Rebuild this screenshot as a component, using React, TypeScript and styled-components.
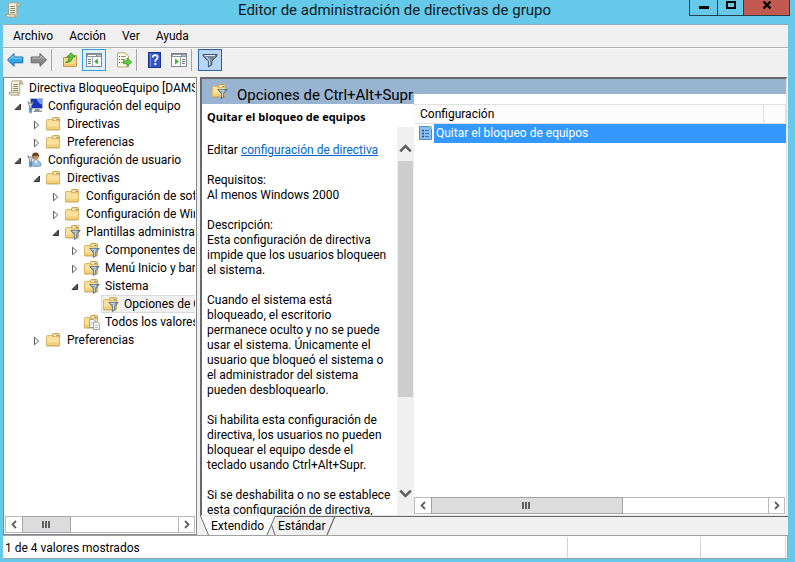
import React from "react";
import styled, { createGlobalStyle, css } from "styled-components";

const GlobalStyle = createGlobalStyle`
  * { box-sizing: border-box; }
  body { margin: 0; }
  body, button, table { font-family: Roboto, "Open Sans", sans-serif; font-size: 12px; line-height: 15px; color: #000; }
  button { border: 0; padding: 0; background: none; }
  svg { display: block; flex: none; }
`;

const Frame = styled.div`
  display: flex;
  flex-direction: column;
  height: 100vh;
  padding: 0 7px 3px 3px;
  background: #66c9ea;
  overflow: hidden;
`;

const TitleBar = styled.header`
  display: grid;
  grid-template-columns: 104px 1fr 108px;
  flex: none;
  height: 24px;
  margin-right: -2px;
`;
const TitleIcon = styled.div`
  padding: 2px;
`;
const Title = styled.h1`
  margin: 0;
  font-size: 15px;
  line-height: 20px;
  font-weight: 400;
  text-align: center;
  white-space: nowrap;
  color: #0b1c24;
`;
const WindowButtons = styled.div`
  display: flex;
  justify-content: flex-end;
  height: 16px;
`;
const WindowButton = styled.button<{ $kind?: "middle" | "close" }>`
  display: flex;
  justify-content: center;
  width: ${(p) => (p.$kind === "close" ? 47 : p.$kind === "middle" ? 27 : 29)}px;
  border: 1px solid #23404b;
  border-top: 0;
  margin-left: -1px;
  background: ${(p) => (p.$kind === "close" ? "#c35a50" : "transparent")};
`;

const Client = styled.main`
  display: flex;
  flex-direction: column;
  flex: 1;
  min-height: 0;
  background: #f0f0f0;
  border-top: 1px solid #8fa9b5;
`;
const MenuBar = styled.nav`
  display: flex;
  gap: 16px;
  flex: none;
  height: 23px;
  padding: 0 10px;
  border-bottom: 1px solid #b0b0b0;
`;
const MenuItem = styled.button`
  height: 22px;
`;
const ToolBar = styled.div`
  display: flex;
  flex: none;
  height: 29px;
  border-top: 1px solid #fafafa;
`;
const Tool = styled.button<{ $state?: "hot" | "checked" }>`
  display: flex;
  align-items: center;
  justify-content: center;
  width: 24px;
  height: 22px;
  ${(p) => p.$state === "hot" && css`background: #e0f0fb; border: 1px solid #2f9fdf;`}
  ${(p) => p.$state === "checked" && css`background: #b9d5f6; border: 1px solid #2b619c;`}
`;
const ToolSeparator = styled.div`
  width: 1px;
  height: 22px;
  margin-right: 6px;
  background: #a5a5a5;
`;
const ToolGap = styled.div`
  width: 6px;
`;

const Panes = styled.div`
  display: grid;
  grid-template-columns: 194px minmax(0, 1fr);
  gap: 3px;
  flex: 1;
  min-height: 0;
`;
const TreePane = styled.section`
  display: flex;
  flex-direction: column;
  min-height: 0;
  background: #fff;
  border: 1px solid #828790;
`;
const Tree = styled.ul`
  flex: 1;
  min-height: 0;
  margin: 0;
  padding: 1px 1px 0 0;
  list-style: none;
  overflow: hidden;
`;
const TreeRow = styled.li<{ $level: number }>`
  display: flex;
  height: 18px;
  padding-left: ${(p) => (p.$level === 0 ? 2 : 6 + 19 * (p.$level - 1))}px;
`;
const Expander = styled.button`
  display: flex;
  align-items: center;
  justify-content: center;
  flex: none;
  width: 15px;
  height: 18px;
  padding-top: 2px;
`;
const TreeLabel = styled.button<{ $selected?: boolean }>`
  display: flex;
  align-items: center;
  gap: 5px;
  flex: 1;
  min-width: 0;
  padding-left: 1px;
  border: 1px solid ${(p) => (p.$selected ? "#dadada" : "transparent")};
  border-right: 0;
  background: ${(p) => (p.$selected ? "#f0f0f0" : "transparent")};
  white-space: nowrap;
  overflow: hidden;
`;

const HScroll = styled.div<{ $flush?: boolean }>`
  display: flex;
  flex: none;
  height: 17px;
  margin: 1px 1px 1px ${(p) => (p.$flush ? 0 : 1)}px;
  border: 1px solid #bababa;
  background: #fff;
`;
const HScrollButton = styled.button<{ $end?: boolean }>`
  display: flex;
  align-items: center;
  justify-content: center;
  width: 16px;
  margin-left: ${(p) => (p.$end ? "auto" : 0)};
  border-left: ${(p) => (p.$end ? "1px solid #bababa" : 0)};
`;
const HThumb = styled.div<{ $share: number }>`
  display: flex;
  align-items: center;
  justify-content: center;
  flex: 0 0 ${(p) => p.$share}%;
  margin: -1px 0;
  border: 1px solid #a3a3a3;
  background: #dcdcdc;
`;

const RightSide = styled.div`
  display: flex;
  flex-direction: column;
  min-height: 0;
`;
const ResultPane = styled.section`
  display: grid;
  grid-template-columns: 212px minmax(0, 1fr);
  flex: 1;
  min-height: 0;
  margin-right: 1px;
  border-top: 2px solid #696969;
  border-left: 2px solid #696969;
  border-right: 1px solid #e3e3e3;
  border-bottom: 1px solid #e3e3e3;
  background: #fff;
`;
const Detail = styled.div`
  display: flex;
  flex-direction: column;
  min-height: 0;
`;
const Band = styled.div<{ $tall?: boolean }>`
  display: flex;
  gap: 9px;
  position: relative;
  z-index: ${(p) => (p.$tall ? 1 : 0)};
  flex: none;
  height: ${(p) => (p.$tall ? 25 : 15)}px;
  padding: ${(p) => (p.$tall ? "4px 0 0 10px" : 0)};
  background: #99b4d1;
`;
const BandTitle = styled.h2`
  margin: 0;
  font-size: 15px;
  line-height: 24px;
  font-weight: 400;
  white-space: nowrap;
`;
const PolicyName = styled.h3`
  flex: none;
  margin: 0;
  padding: 5px 5px 3px;
  font-family: "Open Sans", sans-serif;
  font-size: 11px;
  line-height: 15px;
  font-weight: 700;
  white-space: nowrap;
`;
const DetailBody = styled.div`
  display: flex;
  flex: 1;
  min-height: 0;
`;
const Description = styled.div`
  flex: 1;
  min-width: 0;
  padding: 16px 0 0 5px;
  overflow: hidden;
  white-space: pre;
`;
const Paragraph = styled.p`
  margin: 0 0 15px;
`;
const Link = styled.a`
  color: #0066cc;
`;
const VScroll = styled.div`
  display: flex;
  flex-direction: column;
  flex: none;
  width: 17px;
  background: #f0f0f0;
`;
const VScrollButton = styled.button<{ $down?: boolean }>`
  display: flex;
  align-items: center;
  justify-content: center;
  height: ${(p) => (p.$down ? 44 : 34)}px;
  padding-top: ${(p) => (p.$down ? 0 : 8)}px;
`;
const VTrack = styled.div`
  flex: 1;
  padding: 0 1px;
`;
const VThumb = styled.div`
  height: 76%;
  background: #cdcdcd;
`;

const ListPane = styled.div`
  display: flex;
  flex-direction: column;
  min-height: 0;
`;
const ListArea = styled.div`
  flex: 1;
  padding-top: 10px;
`;
const Table = styled.table`
  width: 100%;
  table-layout: fixed;
  border-collapse: collapse;
`;
const HeadCell = styled.th`
  height: 19px;
  padding: 0 0 0 6px;
  border: 1px solid #e0e0e0;
  border-left: 0;
  background: #fcfcfc;
  font-weight: 400;
  text-align: left;
`;
const IconCell = styled.td`
  padding: 0 0 0 5px;
`;
const NameCell = styled.td`
  height: 19px;
  padding: 0 2px;
  background: #3399ff;
  color: #fff;
`;

const Tabs = styled.div`
  display: flex;
  flex: none;
  height: 19px;
`;
const Tab = styled.button<{ $active?: boolean }>`
  padding: 0 1px;
  background: ${(p) => (p.$active ? "#fff" : "#f0f0f0")};
  border-top: 1px solid ${(p) => (p.$active ? "#fff" : "#696969")};
`;
const TabRest = styled.div`
  flex: 1;
  border-top: 1px solid #696969;
`;

const StatusBar = styled.footer`
  display: flex;
  flex: none;
  height: 24px;
  padding: 1px 1px 0 0;
  background: #fff;
  border: 1px solid #a0a0a0;
  border-left: 0;
`;
const StatusCell = styled.div<{ $width?: number }>`
  flex: ${(p) => (p.$width ? `0 0 ${p.$width}px` : 1)};
  padding: 4px 2px 0;
  border-right: 1px solid #d5d5d5;
`;

const ScrollIcon = () => (
  <svg width="16" height="16" viewBox="0 0 16 16">
    <path d="M3.5 2.5Q3.5.8 5.2.8H13.4Q11.8 1.4 11.8 3V12.5H3.5Z" fill="#f6efd9" stroke="#a1977d" strokeWidth=".8" />
    <path d="M12 4.2V2.2Q12.4.8 13.6.9Q15 1.2 15 4.2Z" fill="#d9cda8" stroke="#a1977d" strokeWidth=".7" />
    <path d="M1 12.2H9.6Q9.4 15.2 11.2 15.2H3Q1 15.2 1 12.2Z" fill="#e8dfc0" stroke="#a1977d" strokeWidth=".8" />
    <path d="M9.6 12.3Q9.8 15.2 11.2 15.2Q12.4 15 12.2 12.2" fill="#cfc29a" />
    <path d="M5.3 4.5H10M5.3 6.5H10M5.3 8.5H10M5.3 10.5H10" stroke="#8d8672" />
  </svg>
);

const FolderShape = () => (
  <>
    <path d="M6.5 5V2.5Q6.5 1.5 7.5 1.5H12.5Q13.5 1.5 13.5 2.5V6H6.5Z" fill="#f4d37f" stroke="#cba449" />
    <path d="M8 3.5H10.5" stroke="#fff8de" />
    <path d="M10.5 3.5H12.5" stroke="#5297cf" />
    <path d="M.5 13.5V4.5Q.5 3.5 1.5 3.5H5.5L6.5 4.7H12.5Q13.5 4.7 13.5 5.7V13.5Z" fill="#fae09a" stroke="#d8b464" />
    <path d="M1 10.5H13V13.5H1Z" fill="#f3d07a" />
    <path d="M.5 14H13.5" stroke="#c39b47" strokeWidth=".8" />
  </>
);
const FunnelShape = () => (
  <>
    <path d="M5.8 6.5H15.2L11.9 10.8V13.8L9.4 15.6V10.8Z" fill="#8aa3b5" stroke="#4c6579" strokeWidth=".8" />
    <path d="M7.5 7.3H11.5L10.4 10.6V14" fill="none" stroke="#d7e4ec" strokeWidth=".9" />
  </>
);
const FolderIcon = ({ filter = false }: { filter?: boolean }) => (
  <svg width="16" height="16" viewBox="0 0 16 16">
    <FolderShape />
    {filter && <FunnelShape />}
  </svg>
);
const WrenchShape = () => (
  <>
    <path d="M1.2 3.5V6L2.4 7.2V14.5Q3.5 15.8 4.6 14.5V7.2L5.8 6V3.5L4.6 5.2H2.4Z" fill="#d6dde3" stroke="#637382" strokeWidth=".8" />
    <path d="M3.5 9.5V13.8" stroke="#4a87c8" strokeWidth="1.2" />
  </>
);
const ComputerIcon = () => (
  <svg width="16" height="16" viewBox="0 0 16 16">
    <rect x="3.5" y=".5" width="12" height="10" fill="#1733c4" stroke="#b4bbc4" />
    <path d="M9.5 1H15V6.5Q11.5 6 9.5 1Z" fill="#6f9df0" />
    <path d="M8 11H12.5V12.5H15V14H6.5V12.5H8Z" fill="#8e98a3" />
    <WrenchShape />
  </svg>
);
const UserIcon = () => (
  <svg width="16" height="16" viewBox="0 0 16 16">
    <path d="M4.5 13.8Q4.5 8.6 9 8Q14 8.6 14 13.8Q9 15.4 4.5 13.8Z" fill="#9dc4e8" stroke="#6087ac" strokeWidth=".8" />
    <circle cx="8.5" cy="4.8" r="3.2" fill="#c98f5e" />
    <path d="M5 5Q4.8.6 8.5.6Q12.6.6 12 5.5L10.6 3.4Q6.6 4 5 5Z" fill="#69401d" />
    <path d="M7.6 8.6L9 11.6L10.8 8.6Z" fill="#fff" />
    <WrenchShape />
  </svg>
);
const AllValuesIcon = () => (
  <svg width="16" height="16" viewBox="0 0 16 16">
    <FolderShape />
    <path d="M5.5 5.5H9.5L11.5 7.5V13.5H5.5Z" fill="#fff" stroke="#84909c" strokeWidth=".8" />
    <path d="M9.5 8H13.5L15.5 10V15.5H9.5Z" fill="#fff" stroke="#84909c" strokeWidth=".8" />
    <path d="M6.5 8.5H8.5M6.5 10.5H8.5M10.8 11.5H14M10.8 13.5H14" stroke="#9aa6b4" strokeWidth=".8" />
  </svg>
);
const PolicyIcon = () => (
  <svg width="14" height="16" viewBox="0 0 14 16">
    <path d="M.5 1.5H10L12.5 4V14.5H.5Z" fill="#8bc0f0" stroke="#4f8dc9" />
    <path d="M9.5 1H12.8V4.3Z" fill="#8fd06a" />
    <path d="M3 5.5H5M3 8.5H5M3 11.5H5" stroke="#1d4d8a" strokeWidth="1.6" />
    <path d="M6 5.5H10M6 8.5H10M6 11.5H10" stroke="#3d74b3" />
  </svg>
);

const BackIcon = () => (
  <svg width="18" height="16" viewBox="0 0 18 16">
    <path d="M1.5 8L8 1.5V5H16.8V10.8H8V14.3Z" fill="#30a6ea" stroke="#1b6fb0" />
    <path d="M3.3 7.8L7.2 3.9V6.2H15.8" fill="none" stroke="#8ed4fa" />
  </svg>
);
const ForwardIcon = () => (
  <svg width="18" height="16" viewBox="0 0 18 16">
    <path d="M16.5 8L10 1.5V5H1.2V10.8H10V14.3Z" fill="#8a8a8a" stroke="#636363" />
    <path d="M2.2 6.2H10.8V3.9L14.7 7.8" fill="none" stroke="#bdbdbd" />
  </svg>
);
const UpFolderIcon = () => (
  <svg width="16" height="16" viewBox="0 0 16 16">
    <path d="M1.5 14.5V5.5H8L9.5 3.5H14.5V14.5Z" fill="#f6d989" stroke="#c39c48" />
    <path d="M2 12H14V14H2Z" fill="#edc871" />
    <path d="M3.5 10.5Q7.3 9.5 7.3 5H4.8L9 .8L13.2 5H10.5Q10.3 10.7 3.5 10.5Z" fill="#5dc63b" stroke="#2f8a22" strokeWidth=".8" />
  </svg>
);
const PanelIcon = ({ mirrored = false }: { mirrored?: boolean }) => (
  <svg width="16" height="14" viewBox="0 0 16 14">
    <rect x=".5" y=".5" width="15" height="13" fill="#fff" stroke="#7e8791" />
    <path d="M1 1H15V4H1Z" fill="#8c959f" />
    <path d="M2 2.5H10" stroke="#fff" />
    <path d="M11.5 2.5H12.5M13.5 2.5H14.5" stroke="#dfe5ea" />
    {mirrored ? (
      <>
        <path d="M9.5 4V13" stroke="#9aa3ac" />
        <path d="M11 6.5H14M11 8.5H14M11 10.5H14" stroke="#707a85" />
        <path d="M4 5.5L8 8.5L4 11.5Z" fill="#45b52e" />
      </>
    ) : (
      <>
        <path d="M6.5 4V13" stroke="#9aa3ac" />
        <path d="M2 6.5H5M2 8.5H5M2 10.5H5" stroke="#707a85" />
        <path d="M12 5.5L8 8.5L12 11.5Z" fill="#45b52e" />
      </>
    )}
  </svg>
);
const ExportIcon = () => (
  <svg width="16" height="16" viewBox="0 0 16 16">
    <path d="M1.5.8H9L12.5 4V15H1.5Z" fill="#fdf8e2" stroke="#b8a878" />
    <path d="M3 4.5H4M3 7.5H4M3 10.5H4" stroke="#555" />
    <path d="M5 4.5H9.5M5 7.5H9M5 10.5H7" stroke="#8b8b8b" />
    <path d="M7.5 8.7H11V6L15.7 10.2L11 14.3V11.7H7.5Z" fill="#66cf43" stroke="#329a24" strokeWidth=".8" />
  </svg>
);
const HelpIcon = () => (
  <svg width="14" height="16" viewBox="0 0 14 16">
    <rect x=".5" y=".5" width="12" height="15" fill="#3456c4" stroke="#1c3188" />
    <path d="M2.5 1V15" stroke="#6f8de6" />
    <path d="M4.8 5.4Q4.8 3.2 7.2 3.2Q9.6 3.3 9.6 5.3Q9.6 6.6 8.3 7.4Q7.2 8.1 7.2 9.8" fill="none" stroke="#fff" strokeWidth="1.8" />
    <rect x="6.3" y="11" width="2" height="2" fill="#fff" />
  </svg>
);
const FilterIcon = () => (
  <svg width="16" height="16" viewBox="0 0 16 16">
    <path d="M1 2.5H15V4L9.8 9V13L6.4 15V9L1 4Z" fill="#76899a" stroke="#42566a" />
    <path d="M2.5 3.5H13" stroke="#dbe6ee" />
    <path d="M4.5 5.2L7.6 8.6V13" fill="none" stroke="#c5d3de" strokeWidth="1.2" />
  </svg>
);

const Triangle = ({ open }: { open: boolean }) => (
  <svg width="8" height="10" viewBox="0 0 8 10">
    {open ? (
      <path d="M6.5 2V7.5H1Z" fill="#595959" stroke="#262626" strokeWidth=".9" />
    ) : (
      <path d="M1.5 1.2V8.8L5.7 5Z" fill="#fff" stroke="#606060" />
    )}
  </svg>
);
const Chevron = ({ d, size = 9, weight = 1.8 }: { d: string; size?: number; weight?: number }) => (
  <svg width={size} height={size} viewBox="0 0 9 9">
    <path d={d} fill="none" stroke="#606060" strokeWidth={weight} />
  </svg>
);
const Grip = () => (
  <svg width="9" height="7" viewBox="0 0 9 7">
    <path d="M1 0V7M4 0V7M7 0V7" stroke="#606060" strokeWidth="2" />
  </svg>
);

function HorizontalScroll({ share, flush }: { share: number; flush?: boolean }) {
  return (
    <HScroll $flush={flush}>
      <HScrollButton aria-label="Desplazar a la izquierda">
        <Chevron d="M6 1L2.5 4.5L6 8" />
      </HScrollButton>
      <HThumb $share={share}>
        <Grip />
      </HThumb>
      <HScrollButton $end aria-label="Desplazar a la derecha">
        <Chevron d="M3 1L6.5 4.5L3 8" />
      </HScrollButton>
    </HScroll>
  );
}

type Node = { level: number; text: string; icon: React.ReactNode; open?: boolean; selected?: boolean };

const nodes: Node[] = [
  { level: 0, text: "Directiva BloqueoEquipo [DAMSERVER]", icon: <ScrollIcon /> },
  { level: 1, text: "Configuración del equipo", icon: <ComputerIcon />, open: true },
  { level: 2, text: "Directivas", icon: <FolderIcon />, open: false },
  { level: 2, text: "Preferencias", icon: <FolderIcon />, open: false },
  { level: 1, text: "Configuración de usuario", icon: <UserIcon />, open: true },
  { level: 2, text: "Directivas", icon: <FolderIcon />, open: true },
  { level: 3, text: "Configuración de software", icon: <FolderIcon />, open: false },
  { level: 3, text: "Configuración de Windows", icon: <FolderIcon />, open: false },
  { level: 3, text: "Plantillas administrativas", icon: <FolderIcon filter />, open: true },
  { level: 4, text: "Componentes de Windows", icon: <FolderIcon filter />, open: false },
  { level: 4, text: "Menú Inicio y barra de tareas", icon: <FolderIcon filter />, open: false },
  { level: 4, text: "Sistema", icon: <FolderIcon filter />, open: true },
  { level: 5, text: "Opciones de Ctrl+Alt+Supr", icon: <FolderIcon filter />, selected: true },
  { level: 4, text: "Todos los valores", icon: <AllValuesIcon /> },
  { level: 2, text: "Preferencias", icon: <FolderIcon />, open: false },
];

const paragraphs = [
  "Requisitos:\nAl menos Windows 2000",
  "Descripción:\nEsta configuración de directiva\nimpide que los usuarios bloqueen\nel sistema.",
  "Cuando el sistema está\nbloqueado, el escritorio\npermanece oculto y no se puede\nusar el sistema. Únicamente el\nusuario que bloqueó el sistema o\nel administrador del sistema\npueden desbloquearlo.",
  "Si habilita esta configuración de\ndirectiva, los usuarios no pueden\nbloquear el equipo desde el\nteclado usando Ctrl+Alt+Supr.",
  "Si se deshabilita o no se establece\nesta configuración de directiva,",
];

export default function App() {
  return (
    <>
      <GlobalStyle />
      <Frame>
        <TitleBar>
          <TitleIcon>
            <ScrollIcon />
          </TitleIcon>
          <Title>Editor de administración de directivas de grupo</Title>
          <WindowButtons>
            <WindowButton aria-label="Minimizar">
              <svg width="10" height="10" viewBox="0 0 10 10">
                <path d="M0 7.5H10" stroke="#000" strokeWidth="3" />
              </svg>
            </WindowButton>
            <WindowButton $kind="middle" aria-label="Maximizar">
              <svg width="10" height="10" viewBox="0 0 10 10">
                <rect x="1" y="2" width="8" height="6" fill="none" stroke="#000" strokeWidth="2" />
              </svg>
            </WindowButton>
            <WindowButton $kind="close" aria-label="Cerrar">
              <svg width="10" height="10" viewBox="0 0 10 10">
                <path d="M1.5 1.5L8.5 8.5M8.5 1.5L1.5 8.5" stroke="#000" strokeWidth="2.4" />
              </svg>
            </WindowButton>
          </WindowButtons>
        </TitleBar>
        <Client>
          <MenuBar>
            {["Archivo", "Acción", "Ver", "Ayuda"].map((m) => (
              <MenuItem key={m}>{m}</MenuItem>
            ))}
          </MenuBar>
          <ToolBar>
            <Tool aria-label="Atrás"><BackIcon /></Tool>
            <Tool aria-label="Adelante"><ForwardIcon /></Tool>
            <ToolSeparator />
            <Tool aria-label="Subir un nivel"><UpFolderIcon /></Tool>
            <Tool $state="hot" aria-label="Mostrar árbol"><PanelIcon /></Tool>
            <ToolGap />
            <Tool aria-label="Exportar lista"><ExportIcon /></Tool>
            <ToolSeparator />
            <Tool aria-label="Ayuda"><HelpIcon /></Tool>
            <Tool aria-label="Panel de acciones"><PanelIcon mirrored /></Tool>
            <ToolSeparator />
            <Tool $state="checked" aria-label="Filtro"><FilterIcon /></Tool>
          </ToolBar>
          <Panes>
            <TreePane>
              <Tree>
                {nodes.map((n, i) => (
                  <TreeRow key={i} $level={n.level}>
                    {n.level > 0 && (
                      <Expander aria-label={n.text} disabled={n.open === undefined}>
                        {n.open !== undefined && <Triangle open={n.open} />}
                      </Expander>
                    )}
                    <TreeLabel $selected={n.selected}>
                      {n.icon}
                      {n.text}
                    </TreeLabel>
                  </TreeRow>
                ))}
              </Tree>
              <HorizontalScroll share={26} />
            </TreePane>
            <RightSide>
              <ResultPane>
                <Detail>
                  <Band $tall>
                    <FolderIcon filter />
                    <BandTitle>Opciones de Ctrl+Alt+Supr</BandTitle>
                  </Band>
                  <PolicyName>Quitar el bloqueo de equipos</PolicyName>
                  <DetailBody>
                    <Description>
                      <Paragraph>
                        Editar <Link href="#editar">configuración de directiva</Link>
                      </Paragraph>
                      {paragraphs.map((p) => (
                        <Paragraph key={p}>{p}</Paragraph>
                      ))}
                    </Description>
                    <VScroll>
                      <VScrollButton aria-label="Desplazar hacia arriba">
                        <Chevron d="M.8 6.5L4.5 2.8L8.2 6.5" size={13} />
                      </VScrollButton>
                      <VTrack>
                        <VThumb />
                      </VTrack>
                      <VScrollButton $down aria-label="Desplazar hacia abajo">
                        <Chevron d="M.8 2.5L4.5 6.2L8.2 2.5" size={13} />
                      </VScrollButton>
                    </VScroll>
                  </DetailBody>
                </Detail>
                <ListPane>
                  <Band />
                  <ListArea>
                    <Table>
                      <colgroup>
                        <col width="20" />
                        <col />
                        <col width="22" />
                      </colgroup>
                      <thead>
                        <tr>
                          <HeadCell colSpan={2}>Configuración</HeadCell>
                          <HeadCell />
                        </tr>
                      </thead>
                      <tbody>
                        <tr>
                          <IconCell><PolicyIcon /></IconCell>
                          <NameCell colSpan={2}>Quitar el bloqueo de equipos</NameCell>
                        </tr>
                      </tbody>
                    </Table>
                  </ListArea>
                  <HorizontalScroll share={52} flush />
                </ListPane>
              </ResultPane>
              <Tabs>
                <svg width="10" height="19" viewBox="0 0 10 19">
                  <path d="M0 0H10V19H8.5Z" fill="#fff" />
                  <path d="M.5 0L8.5 19" stroke="#696969" />
                </svg>
                <Tab $active>Extendido</Tab>
                <svg width="12" height="19" viewBox="0 0 12 19">
                  <path d="M0 0H10L2 19H0Z" fill="#fff" />
                  <path d="M2 19L10 .5H12M6.5 9L10 19" fill="none" stroke="#696969" />
                </svg>
                <Tab>Estándar</Tab>
                <svg width="10" height="19" viewBox="0 0 10 19">
                  <path d="M0 .5H10M1 19L9 0" fill="none" stroke="#696969" strokeWidth="1.2" />
                </svg>
                <TabRest />
              </Tabs>
            </RightSide>
          </Panes>
          <StatusBar>
            <StatusCell>1 de 4 valores mostrados</StatusCell>
            <StatusCell $width={133} />
            <StatusCell $width={85} />
          </StatusBar>
        </Client>
      </Frame>
    </>
  );
}
